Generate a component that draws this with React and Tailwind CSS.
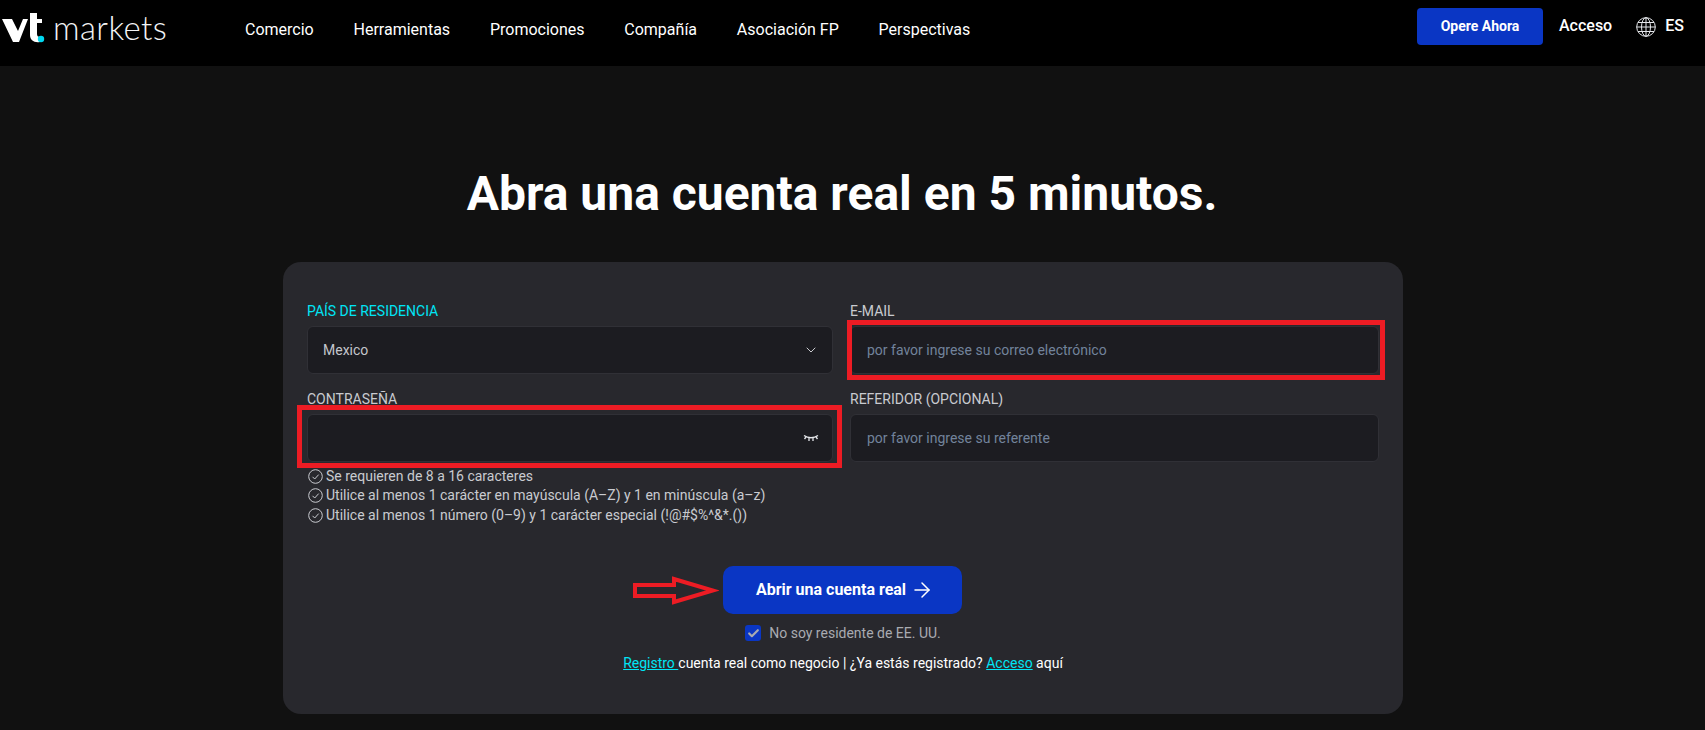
import React from "react";
import { ChevronDown, ArrowRight, Check } from "lucide-react";

const font = { fontFamily: "Roboto, sans-serif" };

function EyeClosed() {
  return (
    <svg width="16" height="10" viewBox="0 0 16 10" fill="none" stroke="#e5e7eb" strokeWidth="1.3" className="-mr-[2px]">
      <path d="M1 2.5c4 3 10 3 14 0" />
      <path d="M3 4L1.5 6M6 5v3M10 5v3M13 4l1.5 2" />
    </svg>
  );
}

function CheckCircle() {
  return (
    <svg width="15" height="15" viewBox="0 0 15 15" fill="none" stroke="#c9cbd0" strokeWidth="1" className="shrink-0">
      <circle cx="7.5" cy="7.5" r="6.8" />
      <path d="M4.5 7.8l2.2 2.2 4-4.4" />
    </svg>
  );
}

function GlobeIcon() {
  return (
    <svg width="20" height="20" viewBox="0 0 20 20" fill="none" stroke="#e5e7eb" strokeWidth="1" className="ml-[24px]">
      <circle cx="10" cy="10" r="9.3" />
      <ellipse cx="10" cy="10" rx="4.5" ry="9.3" />
      <path d="M10 .7v18.6M.7 10h18.6M2 5.5h16M2 14.5h16" />
    </svg>
  );
}

function Logo() {
  return (
    <div className="flex items-center">
      <svg width="46" height="32" viewBox="0 0 46 32">
        <path d="M2 7h10l6 12 5-12h5l-9 23h-6z" fill="#fff" />
        <path d="M30 1h7v6h5v4h-5v11c0 2 1 3 3 3v5c-6 1-10-2-10-7z" fill="#fff" />
        <circle cx="41" cy="27" r="3.2" fill="#00d8f0" />
      </svg>
      <span className="text-[33px] leading-none font-light text-gray-100 ml-[7px] tracking-[0.4px] font-['Lato']">markets</span>
    </div>
  );
}

function Field({ label, active, outline, children }) {
  return (
    <div className="relative">
      <div className={`text-sm leading-4 mb-[7px] ${active ? "text-[#00e5f5]" : "text-[#c9cbd0]"}`}>{label}</div>
      <div className="h-12 rounded-md bg-[#1c1c21] border border-[#303036] flex items-center justify-between px-[15px] text-sm text-[#c4c6cc]">
        {children}
      </div>
      {outline}
    </div>
  );
}

export default function App() {
  const nav = ["Comercio", "Herramientas", "Promociones", "Compañía", "Asociación FP", "Perspectivas"];
  return (
    <div style={font} className="min-h-[730px] bg-[#111111] text-white">
      <header className="h-[66px] bg-black flex items-start">
        <div className="w-[245px] pt-[11px] shrink-0"><Logo /></div>
        <nav className="flex gap-[39.8px] text-base leading-5 pt-[20px]">
          {nav.map((n) => <a key={n}>{n}</a>)}
        </nav>
        <div className="ml-auto flex items-center w-[288px] pt-[8px]">
          <button className="w-[126px] h-[37px] pb-[2px] rounded bg-[#0a36c4] text-sm font-bold">Opere Ahora</button>
          <span className="ml-[16px] -mt-[2px] text-base font-medium">Acceso</span>
          <GlobeIcon />
          <span className="ml-[9px] -mt-[2px] text-base font-medium">ES</span>
        </div>
      </header>

      <h1 className="text-5xl leading-none font-bold text-center mt-[104px] mb-[44px] ml-[282px] w-[1120px]">Abra una cuenta real en 5 minutos.</h1>

      <main className="ml-[283px] w-[1120px] h-[452px] rounded-[18px] bg-[#28282d] px-6 pt-[41px]">
        <div className="grid grid-cols-[526px_529px] gap-x-[17px] gap-y-[17px]">
          <Field label="PAÍS DE RESIDENCIA" active>
            <span>Mexico</span>
            <ChevronDown size={16} strokeWidth={1.3} className="-mr-[2px] text-gray-200" />
          </Field>
          <Field
            label="E-MAIL"
            outline={<div className="absolute -left-[3px] -right-[6px] top-[17px] h-[60px] border-[5px] border-[#ed1c24] pointer-events-none" />}
          >
            <span className="text-[#72839b] pl-[1px]">por favor ingrese su correo electrónico</span>
          </Field>
          <Field
            label="CONTRASEÑA"
            outline={<div className="absolute -left-[10px] -right-[9px] top-[14px] h-[63px] border-[5px] border-[#ed1c24] pointer-events-none" />}
          >
            <span />
            <EyeClosed />
          </Field>
          <Field label="REFERIDOR (OPCIONAL)">
            <span className="text-[#72839b] pl-[1px]">por favor ingrese su referente</span>
          </Field>
        </div>

        <ul className="mt-[4.5px] ml-[1px] text-sm leading-[19.5px] text-[#c9cbd0]">
          <li className="flex items-center gap-[3px]"><CheckCircle />Se requieren de 8 a 16 caracteres</li>
          <li className="flex items-center gap-[3px]"><CheckCircle />Utilice al menos 1 carácter en mayúscula (A–Z) y 1 en minúscula (a–z)</li>
          <li className="flex items-center gap-[3px]"><CheckCircle />Utilice al menos 1 número (0–9) y 1 carácter especial (!@#$%^&amp;*.())</li>
        </ul>

        <div className="flex flex-col items-center mt-[41px]">
          <div className="relative -ml-[2px]">
            <svg width="86" height="29" viewBox="0 0 86 29" fill="none" stroke="#ed1c24" strokeWidth="4" className="absolute -left-[90px] top-[10px]">
              <path d="M2 9h39V3l39 11.5L41 26v-6H2z" />
            </svg>
            <button className="w-[239px] h-12 pl-[6px] rounded-[10px] bg-[#0a36c4] text-base font-bold flex items-center justify-center gap-1">
              Abrir una cuenta real <ArrowRight size={24} strokeWidth={1.5} />
            </button>
          </div>
          <label className="flex items-center gap-2 mt-[11px] text-sm text-[#a9abb1] leading-4">
            <span className="w-4 h-4 rounded-[3px] bg-[#0a36c4] flex items-center justify-center">
              <Check size={13} strokeWidth={4} />
            </span>
            No soy residente de EE. UU.
          </label>
          <p className="mt-[12px] text-sm leading-5">
            <a className="underline text-[#00e5f5]">Registro </a>cuenta real como negocio | ¿Ya estás registrado? <a className="underline text-[#00e5f5]">Acceso</a> aquí
          </p>
        </div>
      </main>
    </div>
  );
}
